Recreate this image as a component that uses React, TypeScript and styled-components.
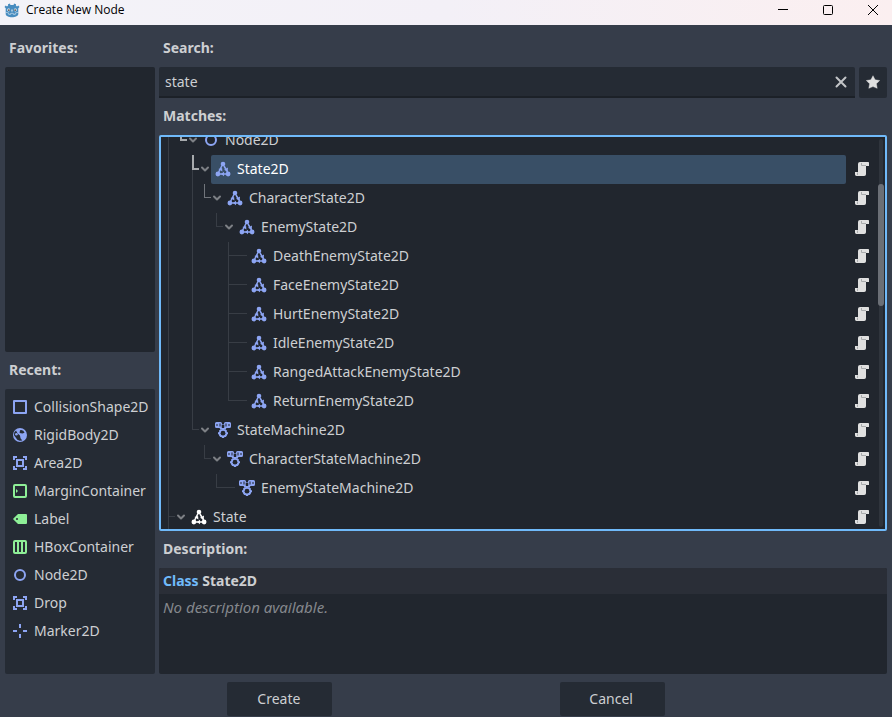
import React from "react";
import styled, { createGlobalStyle } from "styled-components";

const BLUE = "#8da5f3";
const GREEN = "#8eef97";
const WHITE = "#ffffff";
const GUIDE = "#383d45";

const GlobalStyle = createGlobalStyle`
  *, *::before, *::after { box-sizing: border-box; }
  body {
    margin: 0;
    background: #363d4a;
    color: #cdcfd2;
    font: 14px/20px "Noto Sans", "Open Sans", sans-serif;
  }
  button, input { font: inherit; color: inherit; }
  ul { list-style: none; margin: 0; padding: 0; }
  h2, p { margin: 0; }
`;

const Dialog = styled.main`
  display: flex;
  flex-direction: column;
  min-height: 100vh;
`;

const TitleBar = styled.header`
  display: flex;
  align-items: center;
  height: 25px;
  padding: 0 0 6px 4px;
  gap: 6px;
  background: linear-gradient(90deg, #f3f3f8, #f3f0f7 50%, #fbeff0);
  color: #000;
`;

const TitleText = styled.h1`
  flex: 1;
  margin: 0;
  font: 400 12px/16px "Open Sans", "Noto Sans", sans-serif;
`;

const WindowButton = styled.button`
  display: grid;
  place-items: center;
  width: 45px;
  height: 19px;
  padding: 0;
  border: 0;
  background: none;
`;

const WindowButtons = styled.div`
  display: flex;
  margin-right: -3px;
`;

const Body = styled.div`
  flex: 1;
  display: grid;
  grid-template-columns: 150px minmax(0, 1fr);
  gap: 4px;
  padding: 5px 5px 0;
`;

const Column = styled.div`
  display: flex;
  flex-direction: column;
  min-width: 0;
`;

const Heading = styled.h2`
  height: 37px;
  padding-left: 4px;
  font-size: 14px;
  font-weight: 700;
  line-height: 36px;
`;

const SideList = styled.ul<{ $raised?: boolean }>`
  flex: 1 0 0;
  min-height: 285px;
  padding: 4px 0;
  border-radius: 2px;
  background: ${(p) => (p.$raised ? "#252b34" : "#21262e")};
`;

const RecentItem = styled.li`
  display: flex;
  align-items: center;
  gap: 6px;
  height: 28px;
  padding-left: 7px;
  white-space: nowrap;
`;

const SearchRow = styled.div`
  display: flex;
  gap: 4px;
  height: 31px;
`;

const SearchBox = styled.div`
  flex: 1;
  display: flex;
  align-items: center;
  padding-right: 6px;
  border-bottom: 2px solid #1c2128;
  border-radius: 2px 2px 0 0;
  background: #252b34;
`;

const SearchInput = styled.input`
  flex: 1;
  min-width: 0;
  height: 29px;
  padding: 0 6px;
  border: 0;
  outline: 0;
  background: none;
`;

const IconButton = styled.button`
  display: grid;
  place-items: center;
  width: 16px;
  height: 16px;
  padding: 0;
  border: 0;
  background: none;
`;

const FavoriteButton = styled(IconButton)`
  width: 28px;
  height: 31px;
  padding-bottom: 1px;
  border-radius: 2px;
  background: #252b34;
`;

const TreePanel = styled.div`
  flex: 1 0 0;
  display: flex;
  min-height: 396px;
  max-height: 396px;
  overflow: hidden;
  border: 2px solid #70bafa;
  border-radius: 2px;
  background: #21262e;
`;

const TreeRows = styled.ul`
  flex: 1;
  min-width: 0;
  && { margin-top: -11px; }
`;

const TreeRow = styled.li`
  display: flex;
  height: 29px;
  padding-left: 7px;
`;

const GuideCell = styled.span<{ $line: boolean }>`
  width: 12px;
  border-left: 1px solid ${(p) => (p.$line ? GUIDE : "transparent")};
`;

const Connector = styled.span<{ $leaf: boolean }>`
  display: flex;
  flex-direction: column;
  width: ${(p) => (p.$leaf ? 19 : 7)}px;
`;

const ConnectorTop = styled.span<{ $color: string; $thick: boolean }>`
  height: ${(p) => (p.$thick ? 15 : 14)}px;
  border: solid ${(p) => p.$color};
  border-width: ${(p) => (p.$thick ? "0 0 2px 2px" : "0 0 1px 1px")};
`;

const ConnectorBottom = styled.span`
  flex: 1;
  border-left: 1px solid ${GUIDE};
`;

const FoldButton = styled(IconButton)`
  width: 12px;
  height: 29px;
  padding-bottom: 1px;
`;

const TreeLabel = styled.span<{ $selected: boolean }>`
  flex: 1;
  display: flex;
  align-items: center;
  gap: 6px;
  min-width: 0;
  padding: 0 0 1px 4px;
  border-radius: 2px;
  white-space: nowrap;
  background: ${(p) => (p.$selected ? "#394f66" : "transparent")};
  color: ${(p) => (p.$selected ? "#ffffff" : "inherit")};
`;

const ScriptButton = styled(IconButton)`
  width: 32px;
  height: 29px;
  padding-bottom: 1px;
`;

const Scrollbar = styled.div`
  display: grid;
  justify-items: center;
  width: 6px;
  margin: 2px 1px 2px 0;
`;

const ScrollTrack = styled.div`
  grid-area: 1 / 1;
  width: 4px;
  border-radius: 2px;
  background: #2f343c;
`;

const ScrollThumb = styled.div`
  grid-area: 1 / 1;
  width: 6px;
  height: 122px;
  margin-top: 45px;
  border-radius: 3px;
  background: #6b6f76;
`;

const Description = styled.section`
  min-height: 106px;
  border-radius: 2px;
  overflow: hidden;
  background: #21262e;
`;

const ClassLine = styled.p`
  height: 26px;
  padding-left: 4px;
  background: #2a2e37;
  font-weight: 700;
  line-height: 25px;
`;

const Keyword = styled.span`
  color: #70bafa;
`;

const EmptyText = styled.p`
  padding: 3px 4px;
  color: #85888d;
  font-size: 15px;
  font-style: italic;
`;

const Actions = styled.footer`
  display: flex;
  justify-content: space-evenly;
  padding: 8px 0 1px;
`;

const ActionButton = styled.button`
  width: 105px;
  height: 34px;
  padding: 0 2px 0 0;
  border: 0;
  border-radius: 2px;
  background: #252b34;
`;

type IconName =
  | "square" | "rigid" | "area" | "margin" | "label"
  | "hbox" | "circle" | "marker" | "state" | "machine";

const drawings: Record<IconName, React.ReactNode> = {
  square: <path d="M2 2h12v12H2z" fill="none" stroke="currentColor" strokeWidth="2" strokeLinejoin="round" />,
  rigid: (
    <>
      <circle cx="8" cy="8" r="7" />
      <path d="M2.2 5.4 4 3.6l1.6 2.8L8 8.6l.5 2.6 1.8 2.2-2.6.3-2.4-1-2-2.6L2 8.2z" fill="#252b34" />
      <path d="M8 3.2a4 4 0 0 1 4.6 2.6l-2.2.6L7.6 6z" fill="#252b34" />
      <circle cx="4.4" cy="7.2" r="1.3" />
    </>
  ),
  area: <path d="M1 1v4h2V3h2V1zm10 0v2h2v2h2V1zM4 4v8h8V4zm2 2h4v4H6zm-5 5v4h4v-2H3v-2zm12 0v2h-2v2h4v-4z" fillRule="evenodd" />,
  margin: (
    <>
      <rect x="2" y="2" width="12" height="12" rx="1" fill="none" stroke="currentColor" strokeWidth="2" />
      <path d="M4 6v4l2-2z" />
    </>
  ),
  label: <path d="M6 3 1.4 7.4a.9.9 0 0 0 0 1.2L6 13h8a1 1 0 0 0 1-1V4a1 1 0 0 0-1-1zM5 7a1 1 0 1 1 0 2 1 1 0 0 1 0-2z" fillRule="evenodd" />,
  hbox: <path d="M3 1a2 2 0 0 0-2 2v10a2 2 0 0 0 2 2h10a2 2 0 0 0 2-2V3a2 2 0 0 0-2-2zm0 2h2v10H3zm4 0h2v10H7zm4 0h2v10h-2z" fillRule="evenodd" />,
  circle: <circle cx="8" cy="8" r="5" fill="none" stroke="currentColor" strokeWidth="2" />,
  marker: <path d="M7 1h2v4H7zM7 11h2v4H7zM1 7h4v2H1zM11 7h4v2h-4z" />,
  state: (
    <>
      <circle cx="8" cy="3" r="2.3" />
      <circle cx="2.9" cy="13" r="2.4" />
      <circle cx="13.1" cy="13" r="2.4" />
      <path d="M7 4.5 3.5 11.500M9 5l3.600 6M4.500 13h7" fill="none" stroke="currentColor" strokeWidth="1.5" />
      <path d="m3.300 8 3.800-1 .3 3.600zM13 6.500l-.4 4.300-3.600-2zM9 10.800v4.400L6 13z" />
    </>
  ),
  machine: (
    <>
      <path
        d="M1.500 0h4A1.500 1.500 0 0 1 7 1.500v.7h2v-.7A1.500 1.500 0 0 1 10.500 0h4A1.500 1.500 0 0 1 16 1.500v3A1.500 1.500 0 0 1 14.500 6h-3l-1 1.500h-5L4.500 6h-3A1.500 1.500 0 0 1 0 4.500v-3A1.500 1.500 0 0 1 1.500 0z"
      />
      <path d="M1.500 2h1v2h-1zM4.500 1.500h1v3h-1zM10.500 1.500h1v3h-1zM13.500 2h1v2h-1zM6.700 2.800h2.600v2.700l-.8 1h-1l-.8-1z" fill="#21262e" />
      <circle cx="8" cy="11.200" r="4.300" />
      <path d="M7 6h2v10H7zM3 10.200h10v2H3zM4.100 8.700l1.400-1.400 6.400 6.400-1.400 1.400zM10.500 7.300l1.400 1.400-6.400 6.400-1.400-1.400z" />
      <circle cx="8" cy="11.200" r="2.400" fill="#21262e" />
    </>
  ),
};

function Icon({ name, color }: { name: IconName; color: string }) {
  return (
    <svg width="16" height="16" viewBox="0 0 16 16" color={color} fill="currentColor" aria-hidden="true">
      {drawings[name]}
    </svg>
  );
}

function ScriptIcon() {
  return (
    <svg width="16" height="16" viewBox="0 0 16 16" aria-hidden="true">
      <path d="M6 1h8.2a.8.8 0 0 1 .8.8V5h-3v8.2a1.8 1.8 0 0 1-1.8 1.8H2.4A1.4 1.4 0 0 1 1 13.6V11h3V3a2 2 0 0 1 2-2z" fill="#e0e0e0" />
      <path d="M7.500 2v2.500H12M3.500 11.500V14" fill="none" stroke="#a9abad" />
    </svg>
  );
}

function Chevron() {
  return (
    <svg width="12" height="12" viewBox="0 0 12 12" aria-hidden="true">
      <path d="m3 4.500 3 3 3-3" fill="none" stroke="#7d8085" strokeWidth="2" strokeLinecap="round" strokeLinejoin="round" />
    </svg>
  );
}

function AppLogo() {
  return (
    <svg width="16" height="16" viewBox="0 0 16 16" aria-hidden="true">
      <path d="M6 1.500 6.400 3h3.200l.4-1.500 2 .7-.1 1.300 1.100.9 1.300-.8 1.200 1.500-1.200 1.200V12c0 2-3 3.200-6.300 3.200S1.700 14 1.700 12V6.300L.5 5.100l1.200-1.500 1.300.8 1.100-.9L4 2.200z" fill="#478cbf" />
      <path d="M1.700 10.300 4.700 11v1.400h2V11.300h2.600v1.100h2V11l3-.7" fill="none" stroke="#c9deed" strokeWidth=".7" />
      <circle cx="4.700" cy="8" r="1.400" fill="#fff" />
      <circle cx="11.300" cy="8" r="1.400" fill="#fff" />
      <circle cx="4.900" cy="8.100" r=".9" fill="#414042" />
      <circle cx="11.100" cy="8.100" r=".9" fill="#414042" />
      <path d="M7.500 7.500h1v2h-1z" fill="#fff" />
    </svg>
  );
}

const recent: { icon: IconName; color: string; name: string }[] = [
  { icon: "square", color: BLUE, name: "CollisionShape2D" },
  { icon: "rigid", color: BLUE, name: "RigidBody2D" },
  { icon: "area", color: BLUE, name: "Area2D" },
  { icon: "margin", color: GREEN, name: "MarginContainer" },
  { icon: "label", color: GREEN, name: "Label" },
  { icon: "hbox", color: GREEN, name: "HBoxContainer" },
  { icon: "circle", color: BLUE, name: "Node2D" },
  { icon: "area", color: BLUE, name: "Drop" },
  { icon: "marker", color: BLUE, name: "Marker2D" },
];

interface NodeRow {
  name: string;
  icon: IconName;
  color?: string;
  /** One entry per ancestor column; true where its guide line continues. */
  guides: boolean[];
  more?: boolean;
  leaf?: boolean;
  branch?: "strong" | "medium";
  selected?: boolean;
  script?: boolean;
}

const enemyGuides = [true, false, true, false, false];

const rows: NodeRow[] = [
  { name: "Node2D", icon: "circle", guides: [true], branch: "strong", script: false },
  { name: "State2D", icon: "state", guides: [true, false], more: true, branch: "strong", selected: true },
  { name: "CharacterState2D", icon: "state", guides: [true, false, true], branch: "medium" },
  { name: "EnemyState2D", icon: "state", guides: [true, false, true, false] },
  { name: "DeathEnemyState2D", icon: "state", guides: enemyGuides, more: true, leaf: true },
  { name: "FaceEnemyState2D", icon: "state", guides: enemyGuides, more: true, leaf: true },
  { name: "HurtEnemyState2D", icon: "state", guides: enemyGuides, more: true, leaf: true },
  { name: "IdleEnemyState2D", icon: "state", guides: enemyGuides, more: true, leaf: true },
  { name: "RangedAttackEnemyState2D", icon: "state", guides: enemyGuides, more: true, leaf: true },
  { name: "ReturnEnemyState2D", icon: "state", guides: enemyGuides, leaf: true },
  { name: "StateMachine2D", icon: "machine", guides: [true, false] },
  { name: "CharacterStateMachine2D", icon: "machine", guides: [true, false, false] },
  { name: "EnemyStateMachine2D", icon: "machine", guides: [true, false, false, false], leaf: true },
  { name: "State", icon: "state", color: WHITE, guides: [], more: true },
];

const branchColor = { strong: "#a7aaad", medium: "#71757b" };

function TreeItem({ row }: { row: NodeRow }) {
  return (
    <TreeRow>
      {row.guides.map((line, i) => (
        <GuideCell key={i} $line={line} />
      ))}
      <Connector $leaf={!!row.leaf}>
        <ConnectorTop $color={row.branch ? branchColor[row.branch] : GUIDE} $thick={row.branch === "strong"} />
        {row.more && <ConnectorBottom />}
      </Connector>
      {!row.leaf && (
        <FoldButton aria-label={`Collapse ${row.name}`}>
          <Chevron />
        </FoldButton>
      )}
      <TreeLabel $selected={!!row.selected}>
        <Icon name={row.icon} color={row.color ?? BLUE} />
        {row.name}
      </TreeLabel>
      {row.script !== false && (
        <ScriptButton aria-label={`Open script of ${row.name}`}>
          <ScriptIcon />
        </ScriptButton>
      )}
    </TreeRow>
  );
}

export default function App() {
  return (
    <Dialog>
      <GlobalStyle />
      <TitleBar>
        <AppLogo />
        <TitleText>Create New Node</TitleText>
        <WindowButtons>
          <WindowButton aria-label="Minimize">
            <svg width="10" height="10" viewBox="0 0 10 10"><path d="M0 4.500h10" stroke="#000" /></svg>
          </WindowButton>
          <WindowButton aria-label="Maximize">
            <svg width="10" height="10" viewBox="0 0 10 10"><rect x=".5" y=".5" width="9" height="9" rx="1" fill="none" stroke="#000" /></svg>
          </WindowButton>
          <WindowButton aria-label="Close">
            <svg width="10" height="10" viewBox="0 0 10 10"><path d="m0 0 10 10M10 0 0 10" stroke="#000" /></svg>
          </WindowButton>
        </WindowButtons>
      </TitleBar>
      <Body>
        <Column>
          <Heading>Favorites:</Heading>
          <SideList />
          <Heading>Recent:</Heading>
          <SideList $raised>
            {recent.map((item) => (
              <RecentItem key={item.name}>
                <Icon name={item.icon} color={item.color} />
                {item.name}
              </RecentItem>
            ))}
          </SideList>
        </Column>
        <Column>
          <Heading as="label" htmlFor="search">Search:</Heading>
          <SearchRow>
            <SearchBox>
              <SearchInput id="search" type="text" defaultValue="state" />
              <IconButton aria-label="Clear search">
                <svg width="16" height="16" viewBox="0 0 16 16">
                  <path d="m3.500 3.500 9 9M12.500 3.500l-9 9" stroke="#c3c5c8" strokeWidth="2" strokeLinecap="round" />
                </svg>
              </IconButton>
            </SearchBox>
            <FavoriteButton aria-label="Add to favorites">
              <svg width="16" height="16" viewBox="0 0 16 16">
                <path d="m8 1.700 2.100 4.100 4.600.7-3.300 3.200.8 4.600L8 12.600l-4.200 1.700.8-4.600L1.300 6.500l4.600-.7z" fill="#e0e0e0" stroke="#e0e0e0" strokeWidth=".4" strokeLinejoin="round" />
              </svg>
            </FavoriteButton>
          </SearchRow>
          <Heading>Matches:</Heading>
          <TreePanel>
            <TreeRows>
              {rows.map((row) => (
                <TreeItem key={row.name} row={row} />
              ))}
            </TreeRows>
            <Scrollbar>
              <ScrollTrack />
              <ScrollThumb />
            </Scrollbar>
          </TreePanel>
          <Heading>Description:</Heading>
          <Description>
            <ClassLine>
              <Keyword>Class</Keyword> State2D
            </ClassLine>
            <EmptyText>No description available.</EmptyText>
          </Description>
        </Column>
      </Body>
      <Actions>
        <ActionButton>Create</ActionButton>
        <ActionButton>Cancel</ActionButton>
      </Actions>
    </Dialog>
  );
}
